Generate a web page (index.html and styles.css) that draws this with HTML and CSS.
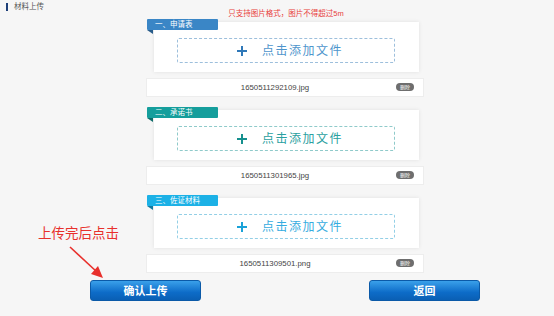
FILE: index.html
```html
<!DOCTYPE html>
<html lang="zh">
<head>
<meta charset="utf-8">
<title>材料上传</title>
<link rel="stylesheet" href="styles.css">
</head>
<body>
<div class="page">
  <div class="top">
    <span class="top-bar"></span>
    <span class="top-title">材料上传</span>
  </div>
  <div class="main">
    <div class="notice">只支持图片格式，图片不得超过5m</div>

    <div class="section">
      <div class="card">
        <div class="tag tag-blue">一、申请表</div>
        <div class="drop drop-blue"><span class="plus"></span><span class="drop-text">点击添加文件</span></div>
      </div>
      <div class="file-row"><span class="file-name">1650511292109.jpg</span><span class="del">删除</span></div>
    </div>

    <div class="section">
      <div class="card">
        <div class="tag tag-teal">二、承诺书</div>
        <div class="drop drop-teal"><span class="plus"></span><span class="drop-text">点击添加文件</span></div>
      </div>
      <div class="file-row"><span class="file-name">1650511301965.jpg</span><span class="del">删除</span></div>
    </div>

    <div class="section">
      <div class="card">
        <div class="tag tag-cyan">三、佐证材料</div>
        <div class="drop drop-cyan"><span class="plus"></span><span class="drop-text">点击添加文件</span></div>
      </div>
      <div class="file-row"><span class="file-name">1650511309501.png</span><span class="del">删除</span></div>
    </div>
  </div>

  <div class="actions">
    <button class="btn">确认上传</button>
    <button class="btn">返回</button>
  </div>

  <div class="annot">上传完后点击</div>
  <svg class="arrow" width="60" height="50" viewBox="0 0 60 50">
    <line x1="10" y1="6" x2="37" y2="31" stroke="#e8302c" stroke-width="1.6"/>
    <polygon points="43,37 31,33 38,25" fill="#e8302c"/>
  </svg>
</div>
</body>
</html>
```

FILE: styles.css
```css
html, body {
  margin: 0;
  padding: 0;
  background: #f6f6f6;
  font-family: "Liberation Sans", "Noto Sans CJK SC", sans-serif;
}
.page {
  position: relative;
  width: 554px;
  height: 316px;
}
.top {
  height: 9px;
  display: flex;
  align-items: flex-start;
  padding-left: 6px;
  padding-top: 2px;
  box-sizing: border-box;
}
.top-bar {
  width: 2px;
  height: 8px;
  background: #1d3f78;
  margin-top: 1px;
}
.top-title {
  margin-left: 6px;
  font-size: 7.5px;
  line-height: 10px;
  color: #555;
}
.main {
  margin-left: 146px;
  width: 278px;
}
.notice {
  height: 10px;
  line-height: 10px;
  font-size: 7.5px;
  color: #e8413b;
  text-align: center;
  margin-left: 2px;
}
.section {
  margin-top: 3px;
}
.section + .section {
  margin-top: 13px;
}
.card {
  position: relative;
  margin-left: 8px;
  width: 265px;
  height: 50px;
  box-sizing: border-box;
  background: #fff;
  box-shadow: 0 0 4px rgba(0, 0, 0, 0.09);
  padding: 16px 24px 9px 23px;
}
.tag {
  position: absolute;
  left: -7px;
  top: -3px;
  width: 71px;
  height: 11px;
  line-height: 11px;
  font-size: 7.5px;
  color: #fff;
  padding-left: 8px;
  box-sizing: border-box;
  border-radius: 1px;
}
.tag::after {
  content: "";
  position: absolute;
  left: 0;
  top: 11px;
  border-top: 4px solid #1e4f80;
  border-left: 6px solid transparent;
}
.tag-blue { background: #3a86c6; }
.tag-blue::after { border-top-color: #285c8a; }
.tag-teal { background: #159e9c; }
.tag-teal::after { border-top-color: #0e6c6a; }
.tag-cyan { background: #1cb1e6; }
.tag-cyan::after { border-top-color: #137aa0; }

.drop {
  height: 25px;
  border: 1px dashed #9bbcd8;
  border-radius: 2px;
  box-sizing: border-box;
  display: flex;
  align-items: center;
  justify-content: center;
  padding-left: 8px;
}
.plus {
  position: relative;
  width: 10px;
  height: 10px;
  margin-right: 15px;
}
.plus::before,
.plus::after {
  content: "";
  position: absolute;
  background: currentColor;
}
.plus::before {
  left: 0;
  top: 4px;
  width: 10px;
  height: 2px;
}
.plus::after {
  left: 4px;
  top: 0;
  width: 2px;
  height: 10px;
}
.drop-text {
  font-size: 12px;
  letter-spacing: 1.5px;
  line-height: 14px;
}
.drop-blue { border-color: #9dbfdc; }
.drop-blue .plus { color: #2f78b8; }
.drop-blue .drop-text { color: #4e95cc; }
.drop-teal { border-color: #8fcaca; }
.drop-teal .plus { color: #16908e; }
.drop-teal .drop-text { color: #2aa0a0; }
.drop-cyan { border-color: #93cfe6; }
.drop-cyan .plus { color: #1aa2d8; }
.drop-cyan .drop-text { color: #35ace0; }

.file-row {
  position: relative;
  margin-top: 6px;
  height: 19px;
  background: #fff;
  border: 1px solid #ededed;
  box-sizing: border-box;
  display: flex;
  align-items: center;
  justify-content: center;
  padding-right: 20px;
}
.file-name {
  font-size: 7.8px;
  color: #444;
}
.del {
  position: absolute;
  right: 9px;
  top: 4px;
  width: 18px;
  height: 8px;
  line-height: 8px;
  border-radius: 4px;
  background: #6e6e6e;
  color: #fff;
  font-size: 5px;
  text-align: center;
}
.actions {
  margin-top: 7px;
  margin-left: 90px;
  display: flex;
  gap: 168px;
}
.btn {
  width: 111px;
  height: 21px;
  border: 1px solid #0b5aa8;
  border-radius: 3px;
  background: linear-gradient(#3aa0ea, #0d6cc8 60%, #0a5fb4);
  color: #fff;
  font-family: "Noto Sans CJK SC", sans-serif;
  font-weight: bold;
  font-size: 11px;
  line-height: 19px;
  padding: 0;
}
.annot {
  position: absolute;
  left: 38px;
  top: 224px;
  font-size: 13.5px;
  line-height: 16px;
  color: #e8302c;
  font-family: "Noto Sans CJK SC", sans-serif;
}
.arrow {
  position: absolute;
  left: 60px;
  top: 241px;
}
```
